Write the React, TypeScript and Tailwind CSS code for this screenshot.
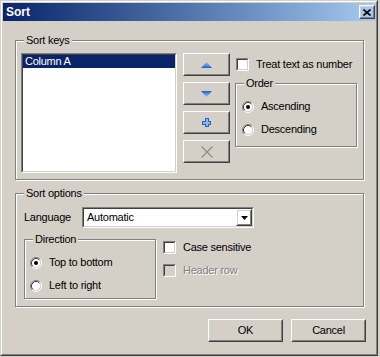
import React from "react";

// classic 3d frames
function Raised({ className = "", children }: { className?: string; children?: React.ReactNode }) {
  return (
    <div className={`border border-t-white border-l-white border-r-[#404040] border-b-[#404040] ${className}`}>
      <div className="flex h-full w-full items-center justify-center border border-t-[#d4d0c8] border-l-[#d4d0c8] border-r-[#808080] border-b-[#808080]">
        {children}
      </div>
    </div>
  );
}

function Sunken({ className = "", inner = "bg-white", children }: { className?: string; inner?: string; children?: React.ReactNode }) {
  return (
    <div className={`border border-t-[#808080] border-l-[#808080] border-r-white border-b-white ${className}`}>
      <div className={`h-full w-full border border-t-[#404040] border-l-[#404040] border-r-[#d4d0c8] border-b-[#d4d0c8] ${inner}`}>
        {children}
      </div>
    </div>
  );
}

function GroupBox({ label, className = "", children }: { label: string; className?: string; children?: React.ReactNode }) {
  return (
    <div className={`border border-[#808080] shadow-[inset_1px_1px_0_#fff,1px_1px_0_#fff] ${className}`}>
      <div className="-mt-[7px] ml-[8px] h-[13px] w-fit bg-[#d4d0c8] px-[2px] leading-[13px]">{label}</div>
      {children}
    </div>
  );
}

function Checkbox({ label, disabled = false }: { label: string; disabled?: boolean }) {
  return (
    <div className="flex h-[13px] items-center">
      <Sunken className="h-[13px] w-[13px] shrink-0" inner={disabled ? "bg-[#d4d0c8]" : "bg-white"} />
      <span
        className={`ml-[7px] leading-[13px] ${disabled ? "text-[#808080] [text-shadow:1px_1px_0_#fff]" : ""}`}
      >
        {label}
      </span>
    </div>
  );
}

function Radio({ label, checked = false }: { label: string; checked?: boolean }) {
  return (
    <div className="flex h-[23px] items-center">
      <svg width="12" height="12" viewBox="0 0 12 12" className="shrink-0">
        <circle cx="6" cy="6" r="4.5" fill="#fff" />
        <path d="M2.11 9.89A5.5 5.5 0 0 1 9.89 2.11" fill="none" stroke="#808080" />
        <path d="M9.89 2.11A5.5 5.5 0 0 1 2.11 9.89" fill="none" stroke="#fff" />
        <path d="M2.82 9.18A4.5 4.5 0 0 1 9.18 2.82" fill="none" stroke="#404040" />
        <path d="M9.18 2.82A4.5 4.5 0 0 1 2.82 9.18" fill="none" stroke="#d4d0c8" />
        {checked && <circle cx="6" cy="6" r="2" fill="#000" />}
      </svg>
      <span className="ml-[7px]">{label}</span>
    </div>
  );
}

function ArrowIcon({ dir }: { dir: "up" | "down" }) {
  const id = `g-${dir}`;
  return (
    <svg width="11" height="6" viewBox="0 0 11 6">
      <defs>
        <linearGradient id={id} x1="0" y1={dir === "up" ? "0" : "1"} x2="0" y2={dir === "up" ? "1" : "0"}>
          <stop offset="0" stopColor="#9cc4f4" />
          <stop offset="1" stopColor="#1c5ccc" />
        </linearGradient>
      </defs>
      <polygon points={dir === "up" ? "5.5,0 11,6 0,6" : "0,0 11,0 5.5,6"} fill={`url(#${id})`} />
    </svg>
  );
}

export default function App(): JSX.Element {
  return (
    <div className="h-[357px] w-[380px] bg-[#d4d0c8] font-['Liberation_Sans',Arial,sans-serif] text-[11px] tracking-[-0.25px] text-black">
      <div className="h-[356px] w-[378px] border border-t-[#d4d0c8] border-l-[#d4d0c8] border-r-[#404040] border-b-[#404040]">
        <div className="h-full border border-t-white border-l-white border-r-[#808080] border-b-[#808080] pl-[1px] pt-[1px]">
          {/* title bar */}
          <div className="flex h-[18px] items-center justify-between bg-linear-to-r from-[#0a246a] to-[#a6caf0] pl-[3px] pr-[1px]">
            <span className="text-[12px] font-bold tracking-normal text-white">Sort</span>
            <Raised className="h-[14px] w-[16px]">
              <svg width="8" height="7" viewBox="0 0 8 7">
                <path d="M0.5 0.5L7.5 6.5M7.5 0.5L0.5 6.5" stroke="#000" strokeWidth="1.6" />
              </svg>
            </Raised>
          </div>

          <div className="pl-[12px]">
            {/* Sort keys */}
            <GroupBox label="Sort keys" className="mt-[19px] h-[140px] w-[349px]">
              <div className="mt-[6px] flex pl-[5px]">
                <Sunken className="h-[120px] w-[156px]">
                  <div className="h-[13px] bg-[#0a246a] pl-[2px] leading-[13px] text-white">Column A</div>
                </Sunken>

                <div className="ml-[6px] flex flex-col gap-[6px]">
                  <Raised className="h-[23px] w-[47px]">
                    <ArrowIcon dir="up" />
                  </Raised>
                  <Raised className="h-[23px] w-[47px]">
                    <ArrowIcon dir="down" />
                  </Raised>
                  <Raised className="h-[23px] w-[47px]">
                    <svg width="9" height="9" viewBox="0 0 9 9" shapeRendering="crispEdges">
                      <polygon
                        points="3,0.5 6,0.5 6,3 8.5,3 8.5,6 6,6 6,8.5 3,8.5 3,6 0.5,6 0.5,3 3,3"
                        fill="#8fb6ec"
                        stroke="#2f62bc"
                      />
                    </svg>
                  </Raised>
                  <Raised className="h-[23px] w-[47px]">
                    <svg width="12" height="12" viewBox="0 0 12 12">
                      <path d="M0.5 0.5L11.5 11.5M11.5 0.5L0.5 11.5" stroke="#8c8c8c" strokeWidth="1.2" />
                    </svg>
                  </Raised>
                </div>

                <div className="ml-[5px] flex flex-col">
                  <div className="ml-[1px] mt-[5px]">
                    <Checkbox label="Treat text as number" />
                  </div>
                  <GroupBox label="Order" className="mt-[12px] h-[64px] w-[122px]">
                    <div className="mt-[5px] flex flex-col pl-[6px]">
                      <Radio label="Ascending" checked />
                      <Radio label="Descending" />
                    </div>
                  </GroupBox>
                </div>
              </div>
            </GroupBox>

            {/* Sort options */}
            <GroupBox label="Sort options" className="mt-[13px] h-[114px] w-[349px]">
              <div className="mt-[7px] flex items-center pl-[8px]">
                <span className="w-[58px]">Language</span>
                <Sunken className="h-[21px] w-[172px]">
                  <div className="flex h-full items-center justify-between">
                    <span className="pl-[3px]">Automatic</span>
                    <Raised className="h-full w-[16px]">
                      <svg width="7" height="4" viewBox="0 0 7 4">
                        <polygon points="0,0 7,0 3.5,4" fill="#000" />
                      </svg>
                    </Raised>
                  </div>
                </Sunken>
              </div>

              <div className="mt-[11px] flex pl-[8px]">
                <GroupBox label="Direction" className="h-[60px] w-[132px]">
                  <div className="mt-[5px] flex flex-col pl-[5px]">
                    <Radio label="Top to bottom" checked />
                    <Radio label="Left to right" />
                  </div>
                </GroupBox>
                <div className="ml-[7px] mt-[2px] flex flex-col gap-[10px]">
                  <Checkbox label="Case sensitive" />
                  <Checkbox label="Header row" disabled />
                </div>
              </div>
            </GroupBox>

            {/* dialog buttons */}
            <div className="mt-[12px] flex justify-end gap-[8px] pr-[10px]">
              <Raised className="h-[23px] w-[75px]">OK</Raised>
              <Raised className="h-[23px] w-[75px]">Cancel</Raised>
            </div>
          </div>
        </div>
      </div>
    </div>
  );
}
